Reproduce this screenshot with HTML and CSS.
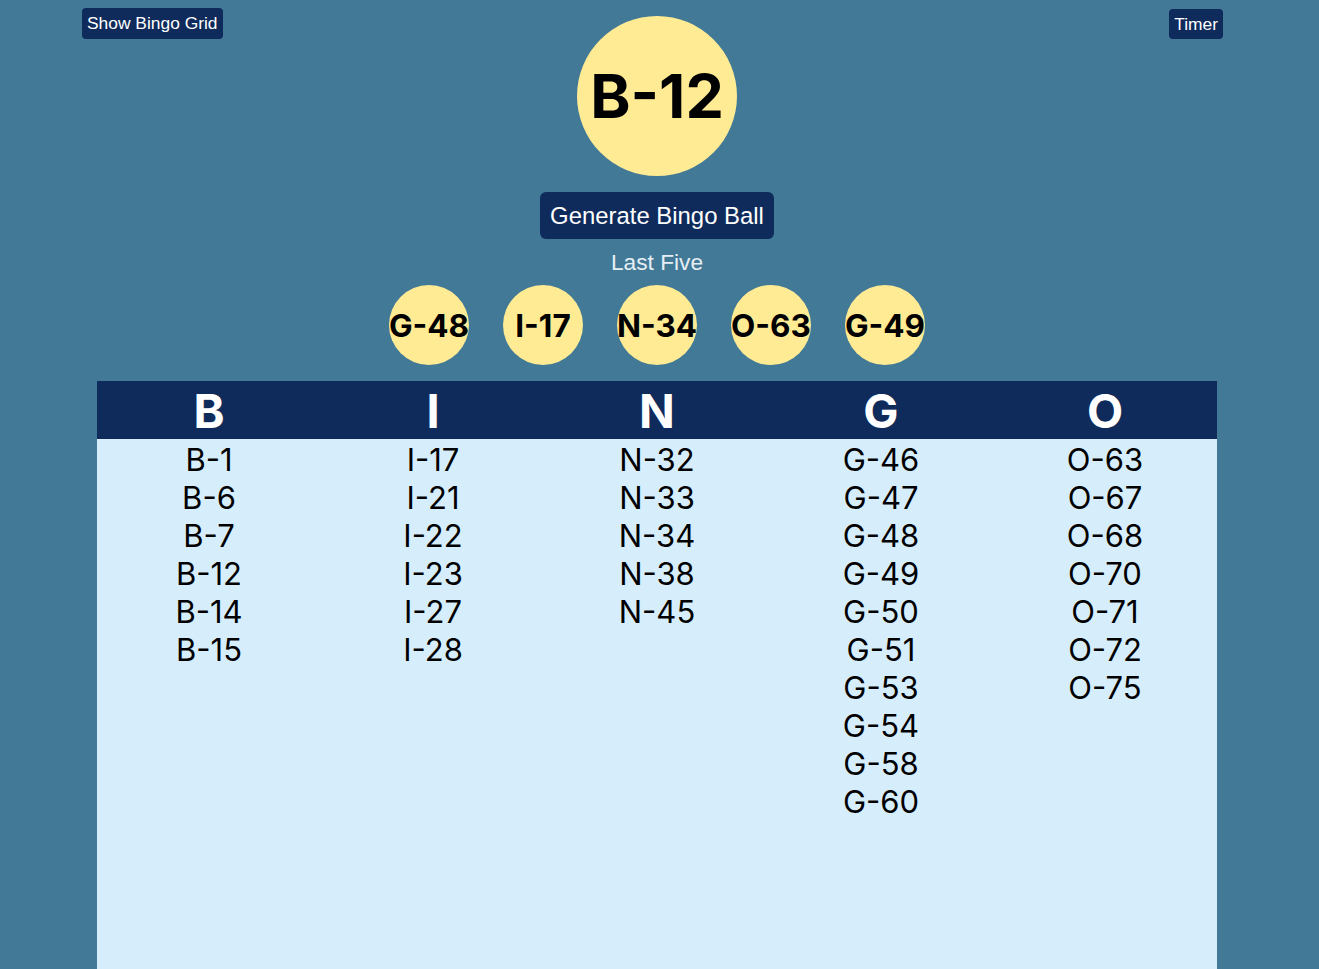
FILE: index.html
```html
<!DOCTYPE html>
<html>
<head>
<meta charset="utf-8">
<link rel="stylesheet" href="styles.css">
</head>
<body>
<div class="top">
  <button class="small-btn left">Show Bingo Grid</button>
  <div class="ball">B-12</div>
  <button class="small-btn right">Timer</button>
</div>
<div class="center">
  <button class="gen-btn">Generate Bingo Ball</button>
  <div class="last-label">Last Five</div>
  <div class="last-five">
    <div class="mini">G-48</div>
    <div class="mini">I-17</div>
    <div class="mini">N-34</div>
    <div class="mini">O-63</div>
    <div class="mini">G-49</div>
  </div>
</div>
<div class="board">
  <div class="head">
    <div>B</div><div>I</div><div>N</div><div>G</div><div>O</div>
  </div>
  <div class="cols">
    <div class="col"><div>B-1</div><div>B-6</div><div>B-7</div><div>B-12</div><div>B-14</div><div>B-15</div></div>
    <div class="col"><div>I-17</div><div>I-21</div><div>I-22</div><div>I-23</div><div>I-27</div><div>I-28</div></div>
    <div class="col"><div>N-32</div><div>N-33</div><div>N-34</div><div>N-38</div><div>N-45</div></div>
    <div class="col"><div>G-46</div><div>G-47</div><div>G-48</div><div>G-49</div><div>G-50</div><div>G-51</div><div>G-53</div><div>G-54</div><div>G-58</div><div>G-60</div></div>
    <div class="col"><div>O-63</div><div>O-67</div><div>O-68</div><div>O-70</div><div>O-71</div><div>O-72</div><div>O-75</div></div>
  </div>
</div>
</body>
</html>
```
FILE: styles.css
```css
html, body {
  margin: 0;
  padding: 0;
  background: #417996;
  height: 100%;
  overflow: hidden;
}
body {
  font-family: Inter, "Noto Sans", sans-serif;
  display: flex;
  flex-direction: column;
}
.top {
  display: grid;
  grid-template-columns: 1fr 160px 1fr;
  align-items: start;
  margin-left: 82px;
  width: 1150px;
}
.small-btn {
  font-family: "Liberation Sans", Arial, sans-serif;
  font-size: 17.4px;
  color: #ffffff;
  background: #0f2b5b;
  border: none;
  border-radius: 4px;
  padding: 0 5px;
  height: 31px;
  cursor: pointer;
}
.small-btn.left {
  justify-self: start;
  margin-top: 8px;
}
.small-btn.right {
  justify-self: end;
  margin-top: 9px;
  height: 30px;
  margin-right: 9px;
}
.ball {
  margin-top: 16px;
  width: 160px;
  height: 160px;
  border-radius: 50%;
  background: #ffeb94;
  display: flex;
  align-items: center;
  justify-content: center;
  font-weight: 700;
  font-size: 61px;
  color: #000;
}
.center {
  margin-left: 97px;
  width: 1120px;
  display: flex;
  flex-direction: column;
  align-items: center;
}
.gen-btn {
  margin-top: 16px;
  font-family: "Liberation Sans", Arial, sans-serif;
  font-size: 23.9px;
  color: #fff;
  background: #0f2b5b;
  border: none;
  border-radius: 6px;
  height: 47px;
  padding: 0 10px;
}
.last-label {
  margin-top: 10px;
  font-family: "Liberation Sans", Arial, sans-serif;
  font-size: 22.7px;
  line-height: 26px;
  color: #e6eef4;
}
.last-five {
  margin-top: 10px;
  display: flex;
  gap: 34px;
}
.mini {
  width: 80px;
  height: 80px;
  border-radius: 50%;
  background: #ffeb94;
  display: flex;
  align-items: center;
  justify-content: center;
  font-weight: 700;
  font-size: 31.5px;
  color: #000;
  white-space: nowrap;
}
.board {
  margin-top: 16px;
  margin-left: 97px;
  width: 1120px;
  flex: 1;
  background: #d6eefc;
}
.head {
  display: grid;
  grid-template-columns: repeat(5, 1fr);
  background: #0f2b5b;
  color: #fff;
  height: 58px;
  align-items: center;
  text-align: center;
  font-weight: 700;
  font-size: 47px;
  line-height: 60px;
}
.cols {
  display: grid;
  grid-template-columns: repeat(5, 1fr);
  padding-top: 2px;
  text-align: center;
  font-size: 31px;
  line-height: 38px;
  color: #000;
}
```
